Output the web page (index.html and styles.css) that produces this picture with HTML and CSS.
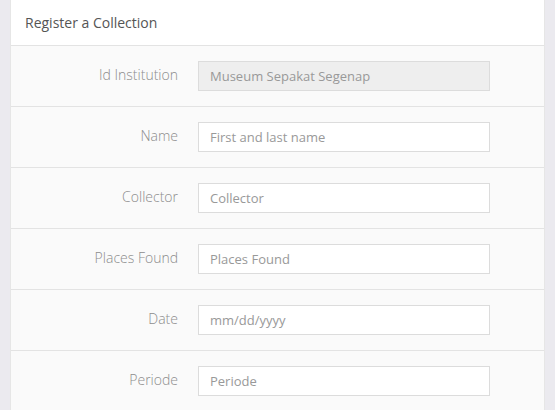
FILE: index.html
```html
<!DOCTYPE html>
<html>
<head>
<meta charset="utf-8">
<link rel="stylesheet" href="styles.css">
</head>
<body>
<div class="card">
  <div class="card-header">Register a Collection</div>
  <form class="form">
    <div class="row">
      <label class="label">Id Institution</label>
      <input class="input input-disabled" type="text" value="Museum Sepakat Segenap" disabled>
    </div>
    <div class="row">
      <label class="label">Name</label>
      <input class="input" type="text" placeholder="First and last name">
    </div>
    <div class="row">
      <label class="label">Collector</label>
      <input class="input" type="text" placeholder="Collector">
    </div>
    <div class="row">
      <label class="label">Places Found</label>
      <input class="input" type="text" placeholder="Places Found">
    </div>
    <div class="row">
      <label class="label">Date</label>
      <input class="input" type="text" placeholder="mm/dd/yyyy">
    </div>
    <div class="row">
      <label class="label">Periode</label>
      <input class="input" type="text" placeholder="Periode">
    </div>
  </form>
</div>
</body>
</html>
```
FILE: styles.css
```css
html, body {
  margin: 0;
  padding: 0;
}
body {
  background: #ebeaef;
  padding: 0 10px;
  font-family: "Open Sans", "DejaVu Sans", sans-serif;
  height: 410px;
  overflow: hidden;
}
.card {
  background: #fafafa;
  border-left: 1px solid #e6e6e6;
  border-right: 1px solid #e6e6e6;
}
.card-header {
  background: #fff;
  height: 46px;
  line-height: 45px;
  padding: 0 14px;
  font-size: 14px;
  color: #555;
  border-bottom: 1px solid #e3e3e3;
  box-sizing: border-box;
}
.form {
  margin: 0;
}
.row {
  display: grid;
  grid-template-columns: 167px 292px;
  column-gap: 20px;
  align-items: center;
  height: 61px;
  border-bottom: 1px solid #e3e3e3;
  box-sizing: border-box;
}
.label {
  text-align: right;
  font-size: 14px;
  font-weight: 300;
  color: #8c8c8c;
  margin-top: -4px;
}
.input {
  box-sizing: border-box;
  height: 30px;
  width: 292px;
  border: 1px solid #dcdcdc;
  background: #fff;
  padding: 0 11px;
  font-family: "Open Sans", "DejaVu Sans", sans-serif;
  font-size: 13px;
  color: #999;
  outline: none;
  border-radius: 0;
}
.input::placeholder {
  color: #999;
}
.input-disabled {
  background: #eee;
  color: #999;
}
```
